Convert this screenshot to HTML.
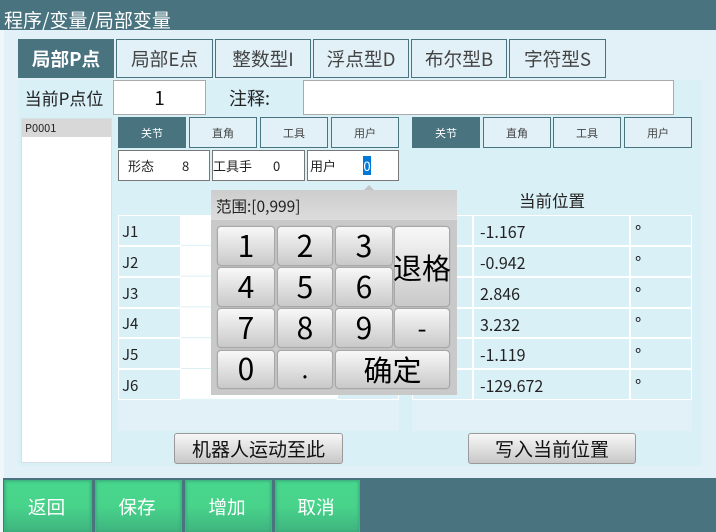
<!DOCTYPE html>
<html lang="zh">
<head>
<meta charset="utf-8">
<title>局部变量</title>
<style>
html,body{margin:0;padding:0;}
body{width:716px;height:532px;overflow:hidden;position:relative;background:#f0f7fa;font-family:"Noto Sans CJK SC","Liberation Sans",sans-serif;color:#222;}
#a div,#a span.p{position:absolute;box-sizing:border-box;}
.c{display:flex;align-items:center;justify-content:center;white-space:nowrap;}
.t{white-space:nowrap;line-height:1;}
.tab{top:39px;height:39px;border:1px solid #48737f;background:#e1f1f7;color:#444;font-size:18.67px;}
.tab2{background:#48737f;color:#fff;font-weight:bold;}
.sub{top:117px;height:31px;border:1px solid #48737f;background:#e1f1f7;color:#444;font-size:11px;}
.sub2{background:#48737f;color:#fff;}
.frm{top:150px;height:31px;border:1px solid #777;background:#fff;}
.cell{background:#d9f0f7;border:1px solid #fff;height:31px;}
.k{border:1px solid #a8a8a8;border-radius:4px;background:linear-gradient(#f8f8f8,#c9c9c9);box-shadow:0 0 1px #999;color:#000;font-size:30px;height:40px;padding-bottom:5px;}
.g{top:480px;height:52px;background:linear-gradient(#47d78c 0,#48d38b 50%,#3fb47f 100%);border:1px solid #3cb77f;border-bottom:0;box-shadow:inset 0 0 3px #38a078;color:#fff;font-size:18.67px;padding-right:3px;}
.b{top:433px;height:31px;border:1px solid #999;border-radius:3px;background:linear-gradient(#f7f7f7,#c8c8c8);color:#111;font-size:19px;}
.v{font-size:16px;left:480px;}
.d{font-size:17px;left:635px;}
</style>
</head>
<body>
<div id="a">
<div style="left:4px;top:30px;width:712px;height:450px;background:#e1f1f7"></div>
<div style="left:0;top:0;width:716px;height:30px;background:#48737f"></div>
<div class="t" style="left:4px;top:10px;color:#fff;font-size:19px">程序/变量/局部变量</div>

<div class="c tab tab2" style="left:18px;width:96px">局部P点</div>
<div class="c tab" style="left:116px;width:97px">局部E点</div>
<div class="c tab" style="left:215px;width:96px">整数型I</div>
<div class="c tab" style="left:313px;width:96px">浮点型D</div>
<div class="c tab" style="left:411px;width:96px">布尔型B</div>
<div class="c tab" style="left:509px;width:97px">字符型S</div>

<div style="left:18px;top:80px;width:684px;height:386px;background:#d9f0f7"></div>
<div class="c" style="left:18px;top:80px;width:92px;height:35px;font-size:17px;color:#222">当前P点位</div>
<div class="c" style="left:113px;top:80px;width:93px;height:35px;background:#fff;border:1px solid #aaa;font-size:19px;color:#111">1</div>
<div class="c" style="left:206px;top:80px;width:87px;height:35px;font-size:18px;color:#222">注释:</div>
<div style="left:303px;top:80px;width:371px;height:35px;background:#fff;border:1px solid #aaa"></div>

<div style="left:21px;top:118px;width:91px;height:345px;background:#fff;border:1px solid #d4e0e6"></div>
<div class="t" style="left:22px;top:119px;width:89px;height:18px;background:#d8d8d8;font-size:11px;line-height:18px;padding-left:3px;color:#222">P0001</div>

<div class="c sub sub2" style="left:118px;width:68px">关节</div>
<div class="c sub" style="left:189px;width:68px">直角</div>
<div class="c sub" style="left:260px;width:68px">工具</div>
<div class="c sub" style="left:331px;width:68px">用户</div>
<div class="c sub sub2" style="left:412px;width:68px">关节</div>
<div class="c sub" style="left:483px;width:68px">直角</div>
<div class="c sub" style="left:553px;width:68px">工具</div>
<div class="c sub" style="left:624px;width:68px">用户</div>

<div class="frm" style="left:118px;width:92px"></div>
<div class="frm" style="left:212px;width:93px"></div>
<div class="frm" style="left:307px;width:92px"></div>
<div class="t" style="left:128px;top:159px;font-size:13px">形态</div>
<div class="t" style="left:182px;top:159px;font-size:13px">8</div>
<div class="t" style="left:213px;top:159px;font-size:13px">工具手</div>
<div class="t" style="left:273px;top:159px;font-size:13px">0</div>
<div class="t" style="left:310px;top:159px;font-size:13px">用户</div>
<div class="c" style="left:363px;top:156px;width:8px;height:19px;background:#0078d7;color:#fff;font-size:13px">0</div>

<div class="c" style="left:412px;top:184px;width:280px;height:31px;font-size:16.5px;color:#222">当前位置</div>

<div style="left:118px;top:400px;width:281px;height:31px;background:#e1f1f7"></div>
<div style="left:412px;top:400px;width:280px;height:31px;background:#e1f1f7"></div>

<!-- left table -->
<div class="cell" style="left:118px;top:215px;width:63px"></div><div class="t" style="left:122px;top:224px;font-size:15px">J1</div>
<div class="cell" style="left:118px;top:246px;width:63px"></div><div class="t" style="left:122px;top:255px;font-size:15px">J2</div>
<div class="cell" style="left:118px;top:277px;width:63px"></div><div class="t" style="left:122px;top:286px;font-size:15px">J3</div>
<div class="cell" style="left:118px;top:308px;width:63px;height:30px"></div><div class="t" style="left:122px;top:316px;font-size:15px">J4</div>
<div class="cell" style="left:118px;top:338px;width:63px"></div><div class="t" style="left:122px;top:347px;font-size:15px">J5</div>
<div class="cell" style="left:118px;top:369px;width:63px"></div><div class="t" style="left:122px;top:378px;font-size:15px">J6</div>
<div style="left:181px;top:215px;width:156px;height:185px;background:linear-gradient(#fff 0,#fff 30px,#d9f0f7 30px,#d9f0f7 31px);background-size:100% 30.8px"></div>
<div class="cell" style="left:337px;top:369px;width:62px"></div>

<!-- right table -->
<div class="cell" style="left:412px;top:215px;width:61px"></div><div class="cell" style="left:473px;top:215px;width:157px"></div><div class="cell" style="left:630px;top:215px;width:62px"></div>
<div class="cell" style="left:412px;top:246px;width:61px"></div><div class="cell" style="left:473px;top:246px;width:157px"></div><div class="cell" style="left:630px;top:246px;width:62px"></div>
<div class="cell" style="left:412px;top:277px;width:61px"></div><div class="cell" style="left:473px;top:277px;width:157px"></div><div class="cell" style="left:630px;top:277px;width:62px"></div>
<div class="cell" style="left:412px;top:308px;width:61px;height:30px"></div><div class="cell" style="left:473px;top:308px;width:157px;height:30px"></div><div class="cell" style="left:630px;top:308px;width:62px;height:30px"></div>
<div class="cell" style="left:412px;top:338px;width:61px"></div><div class="cell" style="left:473px;top:338px;width:157px"></div><div class="cell" style="left:630px;top:338px;width:62px"></div>
<div class="cell" style="left:412px;top:369px;width:61px"></div><div class="cell" style="left:473px;top:369px;width:157px"></div><div class="cell" style="left:630px;top:369px;width:62px"></div>
<div class="t v" style="top:223px">-1.167</div><div class="t d" style="top:222px">°</div>
<div class="t v" style="top:254px">-0.942</div><div class="t d" style="top:253px">°</div>
<div class="t v" style="top:285px">2.846</div><div class="t d" style="top:284px">°</div>
<div class="t v" style="top:316px">3.232</div><div class="t d" style="top:314px">°</div>
<div class="t v" style="top:346px">-1.119</div><div class="t d" style="top:345px">°</div>
<div class="t v" style="top:377px">-129.672</div><div class="t d" style="top:376px">°</div>

<!-- popup -->
<div style="left:211px;top:190px;width:246px;height:205px;background:#c9c9c9"></div>
<div style="left:211px;top:190px;width:246px;height:30px;background:linear-gradient(#cdcdcd,#dcdcdc)"></div>
<div style="left:364px;top:185px;width:0;height:0;border-left:5px solid transparent;border-right:5px solid transparent;border-bottom:5px solid #c4c4c4"></div>
<div class="t" style="left:216px;top:199px;font-size:15.5px;color:#222">范围:[0,999]</div>

<div class="c k" style="left:217px;top:226px;width:58px">1</div>
<div class="c k" style="left:277px;top:226px;width:56px">2</div>
<div class="c k" style="left:335px;top:226px;width:58px">3</div>
<div class="c k" style="left:394px;top:226px;width:56px;height:81px;font-size:29px;padding-bottom:0">退格</div>
<div class="c k" style="left:217px;top:267px;width:58px">4</div>
<div class="c k" style="left:277px;top:267px;width:56px">5</div>
<div class="c k" style="left:335px;top:267px;width:58px">6</div>
<div class="c k" style="left:217px;top:308px;width:58px">7</div>
<div class="c k" style="left:277px;top:308px;width:56px">8</div>
<div class="c k" style="left:335px;top:308px;width:58px">9</div>
<div class="c k" style="left:394px;top:308px;width:56px;font-size:26px;padding-bottom:2px">-</div>
<div class="c k" style="left:217px;top:350px;width:58px;height:39px">0</div>
<div class="c k" style="left:277px;top:350px;width:56px;height:39px;font-size:24px">.</div>
<div class="c k" style="left:335px;top:350px;width:115px;height:39px;font-size:29px;padding-bottom:2px">确定</div>

<div class="c b" style="left:174px;width:169px">机器人运动至此</div>
<div class="c b" style="left:468px;width:168px">写入当前位置</div>

<div style="left:3px;top:478px;width:713px;height:54px;background:#48737f"></div>
<div class="c g" style="left:4px;width:88px">返回</div>
<div class="c g" style="left:95px;width:87px">保存</div>
<div class="c g" style="left:185px;width:87px">增加</div>
<div class="c g" style="left:275px;width:85px">取消</div>
</div>
</body>
</html>
